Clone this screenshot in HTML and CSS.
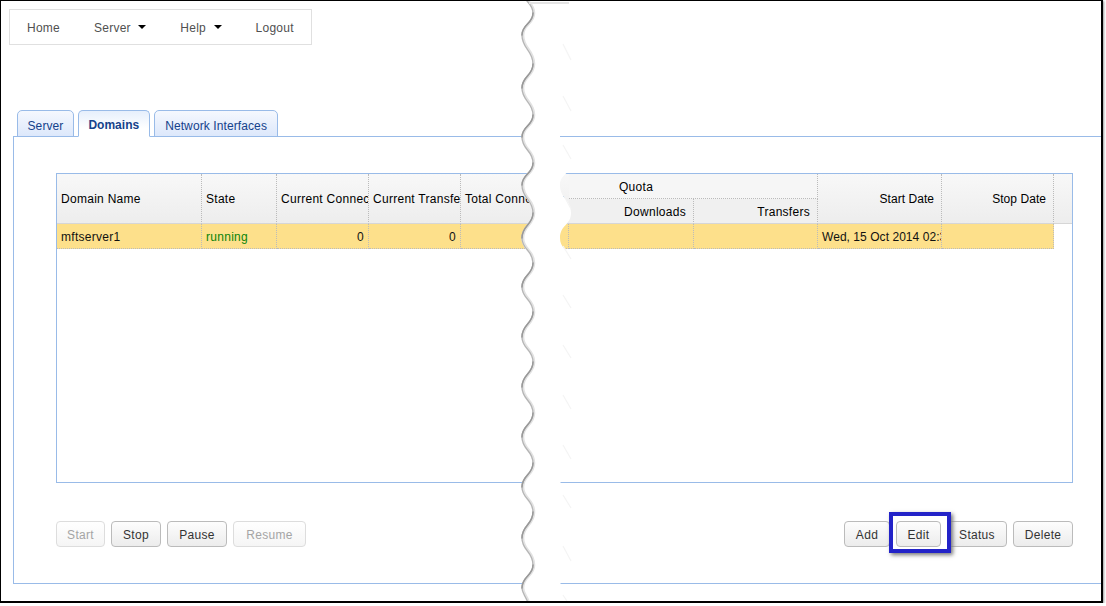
FILE: index.html
```html
<!DOCTYPE html>
<html lang="en">
<head>
<meta charset="utf-8">
<title>Domains</title>
<link rel="stylesheet" href="styles.css">
</head>
<body>
<div class="frame">
  <nav class="nav">
    <a class="nav-item">Home</a>
    <a class="nav-item">Server<i class="caret"></i></a>
    <a class="nav-item">Help<i class="caret"></i></a>
    <a class="nav-item">Logout</a>
  </nav>
  <div class="tabs">
    <div class="tab">Server</div>
    <div class="tab tab-active">Domains</div>
    <div class="tab tab-wide">Network Interfaces</div>
  </div>
  <section class="panel">
    <div class="table">
      <div class="cell head span-rows">Domain Name</div>
      <div class="cell head span-rows">State</div>
      <div class="cell head span-rows">Current Connections</div>
      <div class="cell head span-rows">Current Transfers</div>
      <div class="cell head span-rows open">Total Connections</div>
      <div class="cell head group">Quota</div>
      <div class="cell head span-rows right date">Start Date</div>
      <div class="cell head span-rows right date">Stop Date</div>
      <div class="cell head span-rows filler"></div>
      <div class="cell head sub right">Downloads</div>
      <div class="cell head sub right">Transfers</div>
      <div class="cell row">mftserver1</div>
      <div class="cell row running">running</div>
      <div class="cell row num">0</div>
      <div class="cell row num">0</div>
      <div class="cell row"></div>
      <div class="cell row"></div>
      <div class="cell row"></div>
      <div class="cell row date">Wed, 15 Oct 2014 02:33:41</div>
      <div class="cell row"></div>
    </div>
    <div class="toolbar">
      <div class="btn-group">
        <button class="btn btn-off w49">Start</button>
        <button class="btn w50">Stop</button>
        <button class="btn w60">Pause</button>
        <button class="btn btn-off w73">Resume</button>
      </div>
      <div class="btn-group">
        <button class="btn w46">Add</button>
        <button class="btn w45">Edit</button>
        <button class="btn w60">Status</button>
        <button class="btn w60">Delete</button>
      </div>
    </div>
  </section>
  <div class="callout"></div>
  <svg class="tear" viewBox="1 1 1100 600" aria-hidden="true">
    <defs>
      <path id="wave" d="M522 -10C522 1 533 2 533 13C533 24 522 24 522 35C522 49 533 50 533 64C533 76 522 76 522 88C522 101 533 102 533 115C533 126 522 126 522 137C522 150 533 150 533 163C533 174 522 174 522 185C522 199 533 199 533 213C533 225 522 225 522 238C522 250 533 250 533 263C533 275 522 275 522 287C522 299 533 299 533 312C533 324 522 324 522 337C522 349 533 349 533 362C533 374 522 374 522 387C522 400 533 400 533 413C533 425 522 425 522 437C522 450 533 450 533 463C533 475 522 475 522 487C522 499 533 499 533 512C533 525 522 525 522 538C522 551 533 551 533 565C533 576 522 576 522 588C522 597 533 597 533 640L2000 640L2000 -10Z"/>
      <mask id="gap" maskUnits="userSpaceOnUse" x="0" y="0" width="1200" height="700">
        <use href="#wave" fill="#fff"/>
        <use href="#wave" x="38" fill="#000"/>
      </mask>
    </defs>
    <rect class="tear-fill" x="500" y="0" width="120" height="620" mask="url(#gap)"/>
    <use href="#wave" class="tear-glow" x="0.8"/>
    <use href="#wave" class="tear-edge"/>
    <path class="tear-dark" d="M533 13C533 24 522 24 522 35M533 64C533 76 522 76 522 88M533 115C533 126 522 126 522 137M533 163C533 174 522 174 522 185M533 213C533 225 522 225 522 238M533 263C533 275 522 275 522 287M533 312C533 324 522 324 522 337M533 362C533 374 522 374 522 387M533 413C533 425 522 425 522 437M533 463C533 475 522 475 522 487M533 512C533 525 522 525 522 538M533 565C533 576 522 576 522 588"/>
    <path class="tear-faint" d="M563 44L571 60M563 96L571 111M563 145L571 159M563 194L571 209M563 246L571 259M563 295L571 308M563 345L571 358M563 395L571 409M563 445L571 459M563 495L571 508M563 546L571 561M563 595L567 601"/>
    <rect class="tear-top" x="529" y="2" width="40" height="2"/>
  </svg>
</div>
</body>
</html>
```

FILE: styles.css
```css
* { box-sizing: border-box; }

html, body { margin: 0; padding: 0; background: #fff; }

body {
  font-family: "Liberation Sans", Arial, sans-serif;
  font-size: 12px;
  overflow: hidden;
}

.frame {
  position: relative;
  width: 1103px;
  height: 603px;
  padding: 8px 0 0 8px;
  background: #fff;
  border-style: solid;
  border-color: #000;
  border-width: 1px 2px 2px 1px;
  box-shadow: 1px 1px 2px #999;
  overflow: hidden;
}

.nav {
  display: inline-flex;
  height: 36px;
  align-items: center;
  border: 1px solid #e0e0e0;
  vertical-align: top;
}

.nav-item {
  display: flex;
  align-items: center;
  padding: 1px 17px 0;
  color: #505050;
  letter-spacing: .25px;
}

.caret {
  width: 0;
  height: 0;
  margin-left: 7.5px;
  margin-top: -2px;
  border-style: solid;
  border-width: 4px 4px 0;
  border-color: #000 transparent transparent;
}

.tabs {
  display: flex;
  gap: 4px;
  margin: 65px 0 -1px 8px;
  position: relative;
}

.tab {
  height: 27px;
  padding: 8px 9.5px 0;
  color: #15428b;
  letter-spacing: .1px;
  border: 1px solid #99bbe8;
  border-radius: 5px 5px 0 0;
  background: linear-gradient(#f5f8fe, #dde8fb);
}

.tab-wide { padding: 8px 10.5px 0; }

.tab-active {
  padding-top: 7px;
  font-weight: bold;
  letter-spacing: 0;
  border-bottom-color: #fff;
  background: linear-gradient(#e6effc, #fff 70%);
}

.panel {
  margin-left: 4px;
  height: 448px;
  padding: 36px 28px 0 42px;
  border-style: solid;
  border-color: #99bbe8;
  border-width: 1px 0 1px 1px;
}

.table {
  display: grid;
  grid-template-columns: 145px 75px 92px 92px 108px 125px 124px 124px 112px 1fr;
  grid-template-rows: 25px 25px 25px;
  align-content: start;
  height: 310px;
  border: 1px solid #99bbe8;
}

.cell {
  display: flex;
  align-items: center;
  padding: 0 3px 0 4px;
  white-space: nowrap;
  overflow: hidden;
  color: #000;
  letter-spacing: .28px;
  border-right: 1px dotted #bbb;
}

.head { background: linear-gradient(#f7f7f7, #f0f0f0); }

.span-rows {
  grid-row: span 2;
  background: linear-gradient(#f8f8f8, #ededed);
  border-bottom: 1px solid #d6d6d6;
}

.open { border-right: 0; }

.group {
  grid-column: span 2;
  padding-top: 1px;
  padding-left: 50px;
  border-bottom: 1px dotted #bbb;
  background: #f6f6f6;
}

.sub {
  padding-top: 1px;
  background: #f0f0f0;
  border-bottom: 1px solid #d6d6d6;
}

.right { justify-content: flex-end; padding-right: 7px; }

.filler { border-right: 0; }

.row {
  padding-top: 1px;
  background: #fde08b;
  border-bottom: 1px dotted #bbb;
  color: #111;
}

.running { color: #0a840a; }

.num { justify-content: flex-end; padding-right: 4px; }

.date { letter-spacing: .05px; }

.toolbar {
  display: flex;
  justify-content: space-between;
  margin-top: 38px;
}

.btn-group { display: flex; gap: 6px; }

.btn {
  height: 26px;
  padding: 1px 0 0;
  font: 12px "Liberation Sans", Arial, sans-serif;
  letter-spacing: .3px;
  color: #333;
  border: 1px solid #bbb;
  border-radius: 4px;
  background: linear-gradient(#fdfdfd, #ececec);
}

.btn-off {
  color: #a5a5a5;
  border-color: #ddd;
  background: linear-gradient(#fff, #f5f5f5);
}

.w45 { width: 45px; }
.w46 { width: 46px; }
.w49 { width: 49px; }
.w50 { width: 50px; }
.w60 { width: 60px; }
.w73 { width: 73px; }

.callout {
  position: absolute;
  left: 888px;
  top: 511px;
  width: 62px;
  height: 41px;
  border: 4px solid #2323c8;
  box-shadow: 2px 2px 4px #777;
}

.tear {
  position: absolute;
  left: 0;
  top: 0;
  width: 1100px;
  height: 600px;
}

.tear-fill { fill: #fff; }
.tear-glow { fill: none; stroke: #e2e2e2; stroke-width: 3; }
.tear-edge { fill: none; stroke: #b4b4b4; stroke-width: 1.2; }
.tear-dark { fill: none; stroke: #999; stroke-width: 1.5; stroke-linecap: round; }
.tear-faint { fill: none; stroke: #f4f4f4; stroke-width: 1.2; }
.tear-top { fill: #e4e4e4; }
```
